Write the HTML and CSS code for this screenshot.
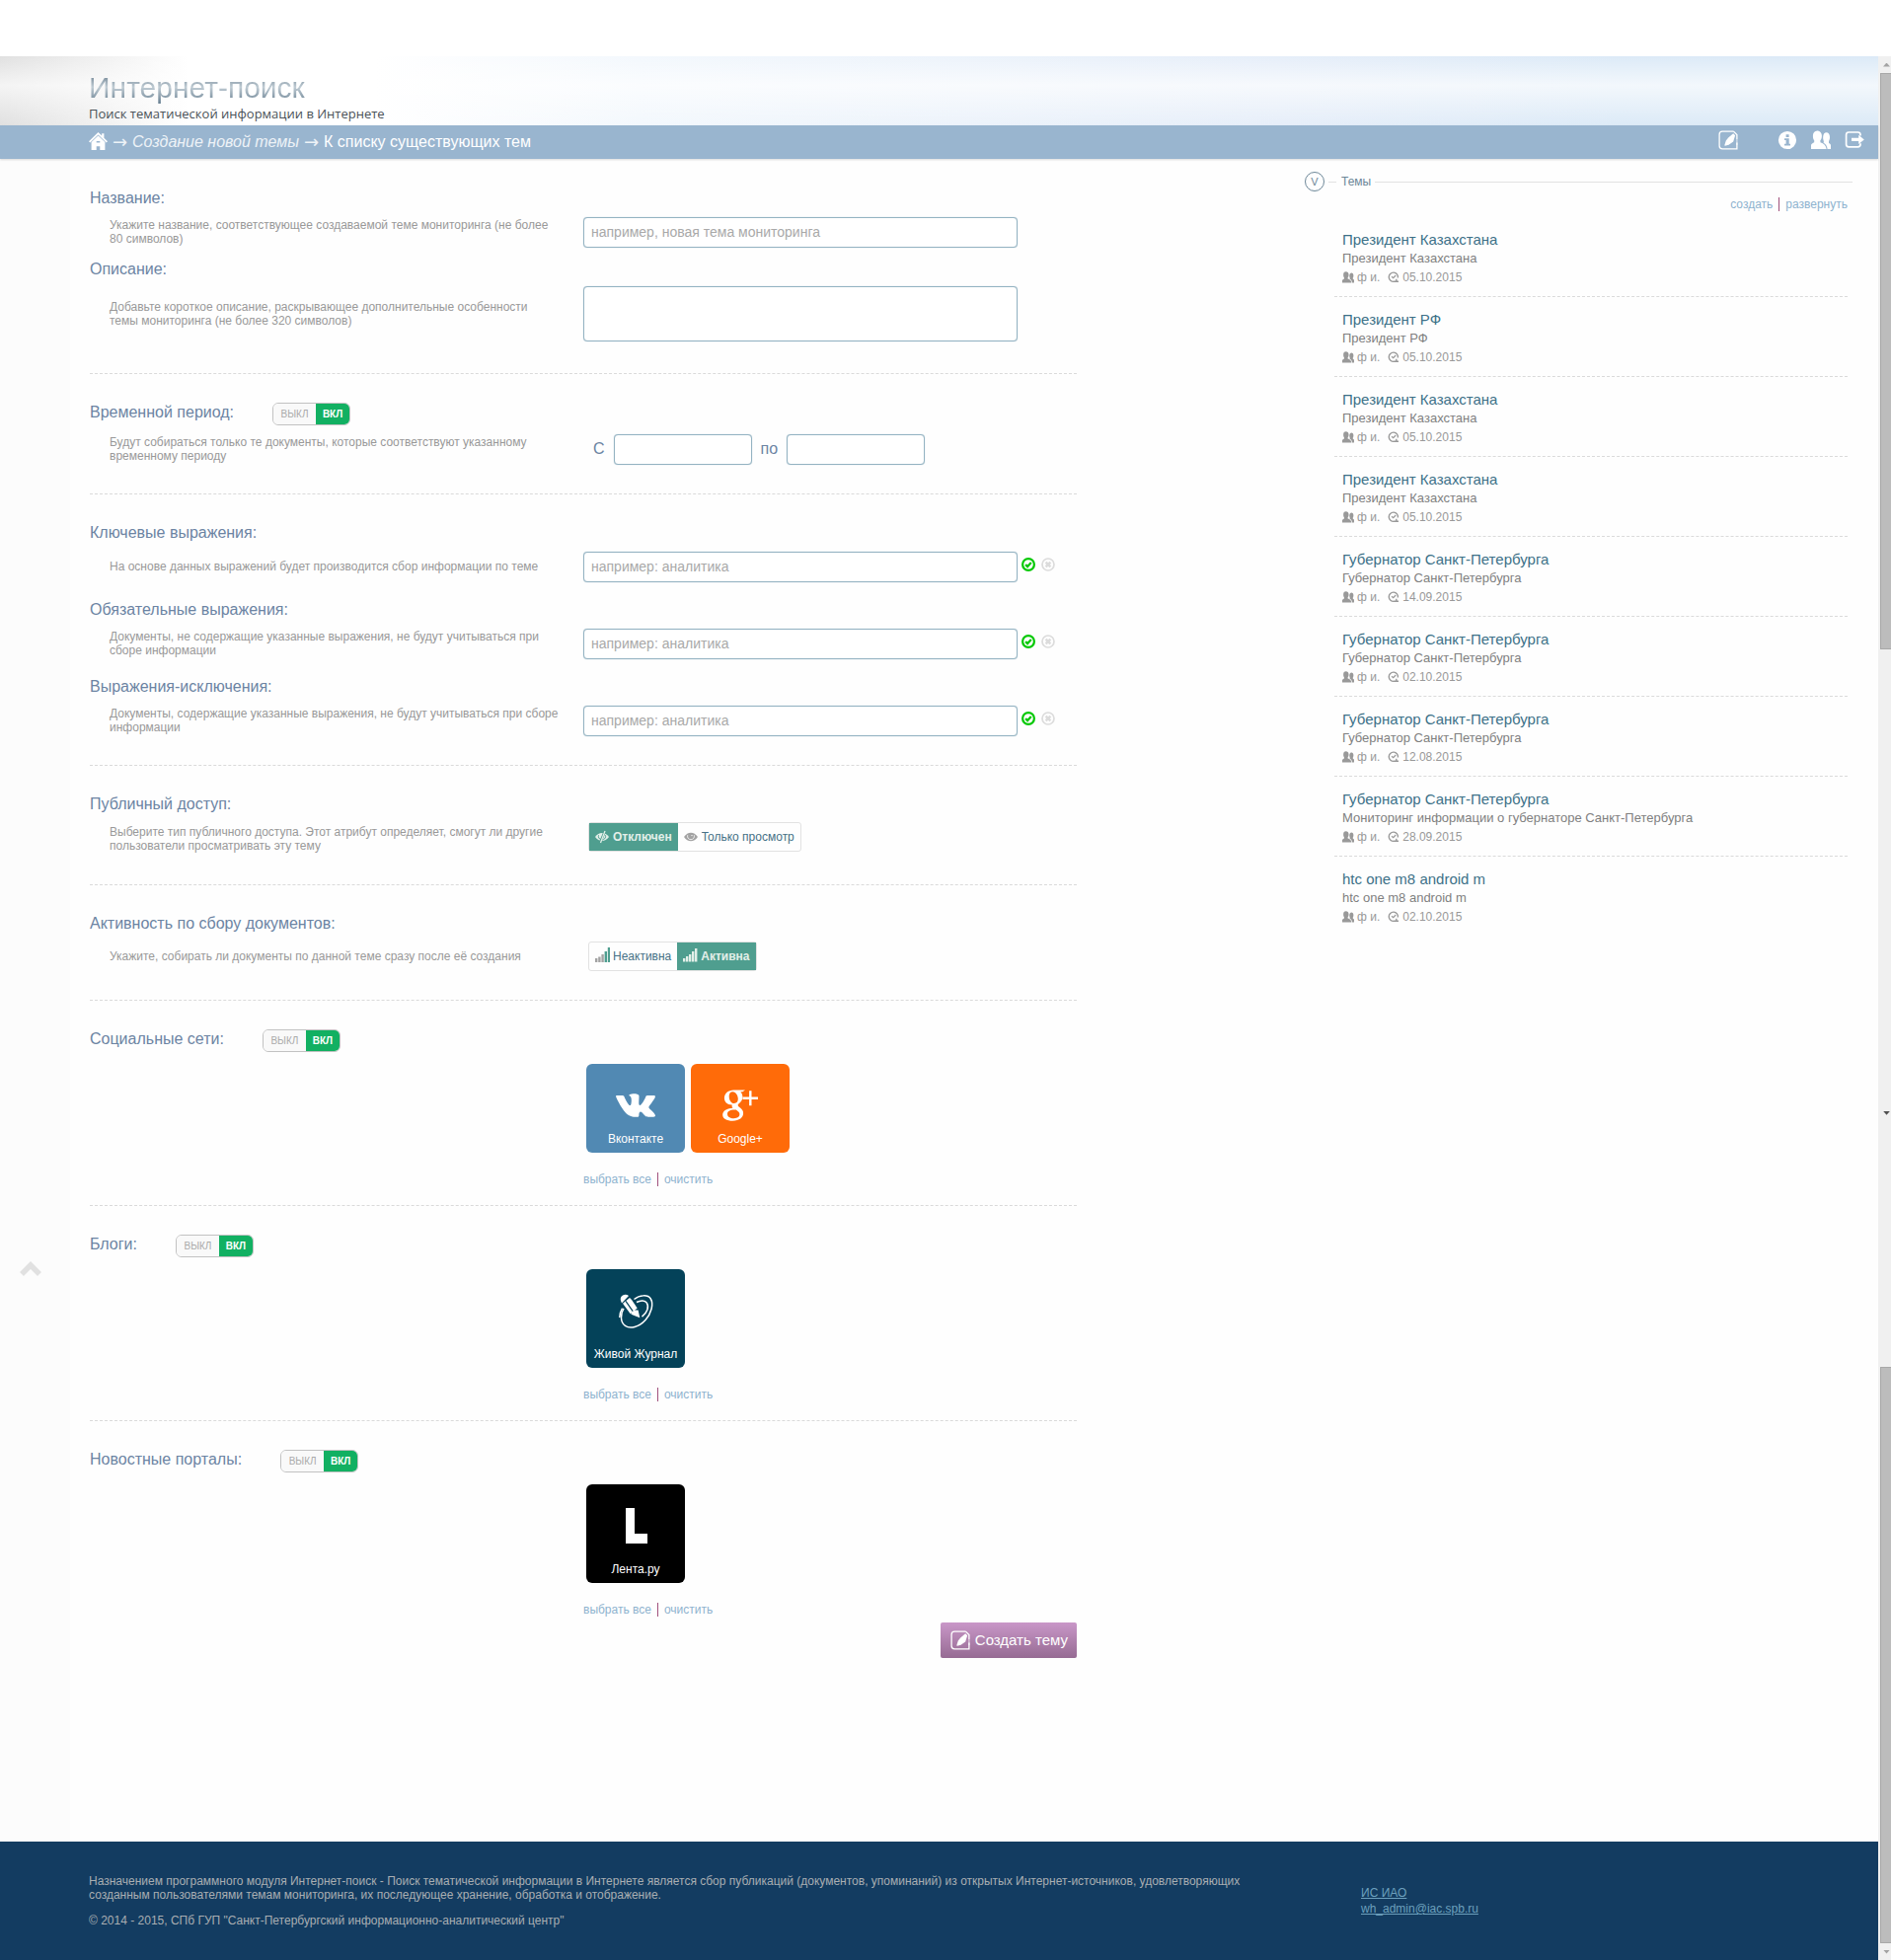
FILE: index.html
```html
<!DOCTYPE html>
<html lang="ru">
<head>
<meta charset="utf-8">
<title>Интернет-поиск</title>
<link rel="stylesheet" href="styles.css">
</head>
<body>
<svg class="sprite" aria-hidden="true">
  <symbol id="i-create" viewBox="0 0 20 20">
    <path d="M15.500 1.100H4.200C2.300 1.100 1.100 2.300 1.100 4.200v11.600c0 1.900 1.200 3.100 3.100 3.100h14.700v-6.400M18.900 9V4.600L15.500 1.100" fill="none" stroke="currentColor" stroke-width="1.300"/>
    <path d="M18.900 9v6" fill="none" stroke="currentColor" stroke-width="1.300" opacity=".6"/>
    <path d="M15.200 3.200l1.900 2-1.900 6.200-4.600 3.400-3.800.9-.5-.5 1.500-4.800 2.400-3z" fill="currentColor"/>
  </symbol>
  <symbol id="i-users" viewBox="0 0 20 20">
    <path d="M12.200 6.500c.2-2.700 1.500-4.200 3.300-4.200 2.100 0 3.500 1.900 3.500 4.700 0 1.700-.4 3-1 4v2c1.300.5 2 1.200 2 2.500V19h-3.400c-.3-3-1.700-5-4-6.300.5-.8.300-1.600-.1-2.700-.4-1-.4-2.200-.3-3.500z" fill="currentColor"/>
    <path d="M0 19v-4c.5-1.200 1.600-2.100 3.200-2.700v-2C2.400 9.300 1.900 7.900 1.900 5.700 1.900 2.600 3.600.5 6.200.5s4.700 2.100 4.700 5.200c0 2.200-.7 3.600-1.500 4.600v2c3.600 1.100 5.800 3.300 6.200 6.700z" fill="currentColor"/>
  </symbol>
  <symbol id="i-clock" viewBox="0 0 12 12">
    <path d="M10.400 6.500A4.600 4.600 0 1 0 6.500 10.300H11M8.800 7.800v2.500" fill="none" stroke="currentColor" stroke-width="1.400"/>
    <path d="M4 5.200l1.700 1.500L8.200 4" fill="none" stroke="currentColor" stroke-width="1.200"/>
  </symbol>
  <symbol id="i-ok" viewBox="0 0 14 14">
    <circle cx="7" cy="7" r="5.900" fill="none" stroke="currentColor" stroke-width="2.200"/>
    <path d="M4.100 7.100l2 2 3.700-4" fill="none" stroke="currentColor" stroke-width="2.200"/>
  </symbol>
  <symbol id="i-no" viewBox="0 0 14 14">
    <circle cx="7" cy="7" r="6" fill="none" stroke="currentColor" stroke-width="1.700"/>
    <path d="M4.600 4.600l4.800 4.800M9.400 4.600L4.600 9.400" fill="none" stroke="currentColor" stroke-width="2.500"/>
  </symbol>
</svg>

<div class="window">
  <div class="page">
    <header class="header">
      <h1 class="brand">Интернет-поиск</h1>
      <p class="tagline">Поиск тематической информации в Интернете</p>
    </header>

    <nav class="nav">
      <div class="crumbs">
        <a href="#" aria-label="На главную">
          <svg class="icon-home" viewBox="0 0 19 18"><path d="M9.500 0l3.700 3.600V1.200h2.200v4.500L19 9.200l-1.300 1.200-8.200-7.800-8.200 7.800L0 9.200z" fill="currentColor"/><path d="M9.500 3.600l6.900 6.500V18h-5.100v-3.800H7.700V18H2.600v-7.900zM7.700 8.900v1.700h3.600V8.900z" fill="currentColor" fill-rule="evenodd"/></svg>
        </a>
        <span>→</span><em>Создание новой темы</em><span>→</span><a href="#">К списку существующих тем</a>
      </div>
      <div class="tools">
        <a href="#" class="tool-create" aria-label="Создать тему"><svg class="icon-20"><use href="#i-create"/></svg></a>
        <a href="#" aria-label="Справка"><svg class="icon-20" viewBox="0 0 20 20"><path fill-rule="evenodd" d="M10 .9a9.100 9.100 0 1 0 0 18.200A9.100 9.100 0 0 0 10 .9zM8.600 4.300h3v2.800h-3zM7 8.200h4.700v5.500H13v1.800H7v-1.800h1.600V10H7z" fill="currentColor"/></svg></a>
        <a href="#" aria-label="Пользователи"><svg class="icon-20"><use href="#i-users"/></svg></a>
        <a href="#" aria-label="Выход"><svg class="icon-20" viewBox="0 0 20 20"><path d="M16 5.500V4.600c0-1.600-1-2.600-2.600-2.600H4.200C2.600 2 1.600 3 1.600 4.600v9.600c0 1.600 1 2.600 2.600 2.600h9.200c1.600 0 2.600-1 2.600-2.600v-.9" fill="none" stroke="currentColor" stroke-width="1.700"/><path d="M7 7.700h7.200V4.700l5.600 4.700-5.600 4.700v-3H7z" fill="currentColor"/></svg></a>
      </div>
    </nav>

    <div class="content">
      <button type="button" class="to-top" aria-label="Наверх">
        <svg class="icon-up" viewBox="0 0 22 15"><path d="M2 13L11 4l9 9" fill="none" stroke="currentColor" stroke-width="5.500"/></svg>
      </button>

      <form class="form">
        <section class="section section--intro">
          <div class="field">
            <label class="title" for="name">Название:</label>
            <div class="row">
              <p class="hint">Укажите название, соответствующее создаваемой теме мониторинга (не более 80 символов)</p>
              <input class="input" id="name" type="text" placeholder="например, новая тема мониторинга">
            </div>
          </div>
          <div class="field">
            <label class="title" for="about">Описание:</label>
            <div class="row">
              <p class="hint">Добавьте короткое описание, раскрывающее дополнительные особенности темы&nbsp;мониторинга (не более 320 символов)</p>
              <textarea class="input input--area" id="about"></textarea>
            </div>
          </div>
        </section>

        <section class="section section--period">
          <div class="head">
            <h2 class="title">Временной период:</h2>
            <label class="switch"><input type="checkbox" checked aria-label="Временной период"><span class="off">ВЫКЛ</span><span class="on">ВКЛ</span></label>
          </div>
          <div class="row">
            <p class="hint">Будут собираться только те документы, которые соответствуют указанному временному периоду</p>
            <div class="period">
              <label for="from">С</label><input class="input input--date" id="from" type="text">
              <label for="to">по</label><input class="input input--date" id="to" type="text">
            </div>
          </div>
        </section>

        <section class="section section--words">
          <div class="field">
            <label class="title" for="keys">Ключевые выражения:</label>
            <div class="row">
              <p class="hint">На основе данных выражений будет производится сбор информации по теме</p>
              <div class="entry"><input class="input" id="keys" type="text" placeholder="например: аналитика">
                <button type="button" class="mark mark--ok" aria-label="Добавить"><svg class="icon-14"><use href="#i-ok"/></svg></button><button type="button" class="mark" aria-label="Очистить"><svg class="icon-14"><use href="#i-no"/></svg></button></div>
            </div>
          </div>
          <div class="field">
            <label class="title" for="must">Обязательные выражения:</label>
            <div class="row">
              <p class="hint">Документы, не содержащие указанные выражения, не будут учитываться при сборе информации</p>
              <div class="entry"><input class="input" id="must" type="text" placeholder="например: аналитика">
                <button type="button" class="mark mark--ok" aria-label="Добавить"><svg class="icon-14"><use href="#i-ok"/></svg></button><button type="button" class="mark" aria-label="Очистить"><svg class="icon-14"><use href="#i-no"/></svg></button></div>
            </div>
          </div>
          <div class="field">
            <label class="title" for="except">Выражения-исключения:</label>
            <div class="row">
              <p class="hint">Документы, содержащие указанные выражения, не будут учитываться при сборе информации</p>
              <div class="entry"><input class="input" id="except" type="text" placeholder="например: аналитика">
                <button type="button" class="mark mark--ok" aria-label="Добавить"><svg class="icon-14"><use href="#i-ok"/></svg></button><button type="button" class="mark" aria-label="Очистить"><svg class="icon-14"><use href="#i-no"/></svg></button></div>
            </div>
          </div>
        </section>

        <section class="section">
          <h2 class="title">Публичный доступ:</h2>
          <div class="row">
            <p class="hint">Выберите тип публичного доступа. Этот атрибут определяет, смогут ли другие пользователи просматривать эту тему</p>
            <div class="choice">
              <label class="option"><input type="radio" name="access" checked>
                <svg class="icon-14" viewBox="0 0 14 12"><path d="M0 6c2-2.700 4.400-4 7-4s5 1.300 7 4c-2 2.700-4.400 4-7 4S2 8.700 0 6z" fill="currentColor"/><path d="M3.500 4.300C2.900 6 3.900 8.200 6 8.600M10.500 4.300c.5 1.700-.3 3.700-2.200 4.300" fill="none" stroke="#4f9e8f" stroke-width="1"/><path d="M10 0L5 12" stroke="#4f9e8f" stroke-width="2.500"/><path d="M10 0L5.500 12" stroke="currentColor" stroke-width="1.300"/></svg>Отключен</label>
              <label class="option"><input type="radio" name="access">
                <svg class="icon-14 icon-gray" viewBox="0 0 14 12"><path d="M0 6c2-2.900 4.400-4.300 7-4.300S12 3.100 14 6c-2 2.900-4.400 4.300-7 4.300S2 8.900 0 6z" fill="currentColor"/><path d="M3.700 4.200C2.900 6.500 4.700 8.700 7 8.700s4.100-2.200 3.300-4.500" fill="none" stroke="#fff" stroke-width=".8"/><circle cx="8" cy="4.600" r=".7" fill="#fff"/></svg>Только просмотр</label>
            </div>
          </div>
        </section>

        <section class="section">
          <h2 class="title">Активность по сбору документов:</h2>
          <div class="row">
            <p class="hint">Укажите, собирать ли документы по данной теме сразу после её создания</p>
            <div class="choice">
              <label class="option option--bars"><input type="radio" name="active">
                <svg class="icon-15" viewBox="0 0 15 15"><path d="M0 11h2.400v4H0zM3.200 9.500h2.400V15H3.200zM6.400 7h2.400v8H6.400z" fill="#a3a3a3"/><path d="M9.600 4H12v11H9.600zM12.800 0H15v15h-2.200z" fill="#4f9e8f"/></svg>Неактивна</label>
              <label class="option option--bars"><input type="radio" name="active" checked>
                <svg class="icon-15" viewBox="0 0 15 15"><path d="M0 11h2.400v3.500H0zM3 9h2.400v5.500H3zM6 7h2.400v7.500H6zM9 4h2.400v10.500H9zM12 1h2.400v13.500H12z" fill="currentColor"/></svg>Активна</label>
            </div>
          </div>
        </section>

        <section class="section section--sources">
          <div class="head">
            <h2 class="title">Социальные сети:</h2>
            <label class="switch"><input type="checkbox" checked aria-label="Социальные сети"><span class="off">ВЫКЛ</span><span class="on">ВКЛ</span></label>
          </div>
          <div class="tiles">
            <label class="tile tile--low tile--vk"><input type="checkbox" checked>
              <svg class="logo" viewBox="-8 -3.500 56 52"><path transform="translate(0 2.500) scale(1.667)" d="M13.162 18.994c.609 0 .858-.406.851-.915-.031-1.917.714-2.949 2.059-1.604 1.488 1.488 1.796 2.519 3.603 2.519h3.200c.808 0 1.126-.26 1.126-.668 0-.863-1.421-2.386-2.625-3.504-1.686-1.565-1.765-1.602-.313-3.486 1.801-2.339 4.157-5.336 2.073-5.336h-3.981c-.772 0-.828.435-1.103 1.083-.995 2.347-2.886 5.387-3.604 4.922-.751-.485-.407-2.406-.35-5.261.015-.754.011-1.271-1.141-1.539-.629-.145-1.241-.205-1.809-.205-2.273 0-3.841.953-2.950 1.119 1.571.293 1.420 3.692 1.054 5.160-.638 2.556-3.036-2.024-4.035-4.305-.241-.548-.315-.974-1.175-.974h-3.255c-.492 0-.787.160-.787.516 0 .602 2.960 6.720 5.786 9.770 2.756 2.975 5.480 2.708 7.376 2.708z" fill="#fff"/></svg>
              <span>Вконтакте</span></label>
            <label class="tile tile--low tile--gp"><input type="checkbox" checked>
              <svg class="logo" viewBox="-10 -10.500 56 52"><path fill-rule="evenodd" fill="#fff" d="M11.500 0H23l-2.600 1.800h-2.200c1.500 1.400 2.200 3.200 2.200 5.200 0 2.700-1.300 4.500-2.900 5.900-1.300 1-1.800 1.600-1.800 2.400 0 1 1 1.800 2.300 2.800 2 1.500 3.100 3 3.100 5.500 0 4.200-3.900 7.700-10.700 7.700C4 31.300.2 28.900.2 25.300c0-3.600 3.300-6.600 10.300-7-.8-.9-1.200-2-.7-3.300C5 15.200 1.900 12 1.900 8 1.900 3.600 6 0 11.500 0zM10.400 1.700c-2.500 0-3.700 2-3.700 4.500 0 3.600 1.900 7.300 5.200 7.300 2.600 0 3.900-1.900 3.900-4.400 0-3.500-2.100-7.400-5.400-7.400zm1.800 18.300c-4.900 0-7.200 1.800-7.200 4.200 0 2.800 2.700 4.500 6.600 4.500s5.800-1.600 5.800-4.100c0-1.900-1.200-2.700-3.600-4.500a10 10 0 0 0-1.600-.1z"/><path d="M20.500 8.200H36M28.300.8v15" stroke="#fff" stroke-width="2.400"/></svg>
              <span>Google+</span></label>
          </div>
          <p class="links"><a href="#">выбрать все</a><a href="#">очистить</a></p>
        </section>

        <section class="section section--sources">
          <div class="head">
            <h2 class="title">Блоги:</h2>
            <label class="switch"><input type="checkbox" checked aria-label="Блоги"><span class="off">ВЫКЛ</span><span class="on">ВКЛ</span></label>
          </div>
          <div class="tiles">
            <label class="tile tile--lj"><input type="checkbox" checked>
              <svg class="logo" viewBox="-11 -9 56 52"><g fill="none" stroke="#fff" stroke-width="1.500"><path d="M15.500 5.500C21 1 29.500.500 32.300 5c3.200 5.500.7 14.800-5.300 21.400-6.500 7.200-15.500 9.500-20.500 6-5.300-3.700-5-12.300-1.500-17.500"/><path d="M18 8.500c4-2.200 8.500-2.300 10.300.7 2.500 4 .7 9.500-4.800 14"/><path d="M.8 24c.2-4 1-6.700 2.700-9.300"/></g><path d="M2 7C1.300 4.500 2 2.700 4 1.400 6 .2 8.300.4 10 2L3 9.600z" fill="#fff"/><path d="M4 9.700L11 4l2 2 5.700 8.600-7 5.700z" fill="#fff"/><path d="M12.500 20.800l.7-4.200h6.400L21.300 24.300z" fill="#fff"/><path d="M7 7.300l7.200 10.400" stroke="#044259" stroke-width="1.200" fill="none"/></svg>
              <span>Живой Журнал</span></label>
          </div>
          <p class="links"><a href="#">выбрать все</a><a href="#">очистить</a></p>
        </section>

        <section class="section section--sources">
          <div class="head">
            <h2 class="title">Новостные порталы:</h2>
            <label class="switch"><input type="checkbox" checked aria-label="Новостные порталы"><span class="off">ВЫКЛ</span><span class="on">ВКЛ</span></label>
          </div>
          <div class="tiles">
            <label class="tile tile--lenta"><input type="checkbox" checked>
              <svg class="logo" viewBox="0 0 56 52"><rect x="18" y="8" width="9" height="36" fill="#fff"/><rect x="18" y="34" width="22" height="10" fill="#fff"/></svg>
              <span>Лента.ру</span></label>
          </div>
          <p class="links"><a href="#">выбрать все</a><a href="#">очистить</a></p>
        </section>

        <button type="submit" class="submit"><svg class="icon-20"><use href="#i-create"/></svg>Создать тему</button>
      </form>

      <aside class="topics">
        <div class="topics-head"><button type="button" class="fold">V</button><h2 class="topics-title">Темы</h2></div>
        <p class="links links--right"><a href="#">создать</a><a href="#">развернуть</a></p>
        <ul class="list">
          <li class="item"><a href="#">Президент Казахстана</a><p>Президент Казахстана</p><div class="meta"><svg class="icon-12"><use href="#i-users"/></svg>ф и.<svg class="icon-12 icon-date"><use href="#i-clock"/></svg>05.10.2015</div></li>
          <li class="item"><a href="#">Президент РФ</a><p>Президент РФ</p><div class="meta"><svg class="icon-12"><use href="#i-users"/></svg>ф и.<svg class="icon-12 icon-date"><use href="#i-clock"/></svg>05.10.2015</div></li>
          <li class="item"><a href="#">Президент Казахстана</a><p>Президент Казахстана</p><div class="meta"><svg class="icon-12"><use href="#i-users"/></svg>ф и.<svg class="icon-12 icon-date"><use href="#i-clock"/></svg>05.10.2015</div></li>
          <li class="item"><a href="#">Президент Казахстана</a><p>Президент Казахстана</p><div class="meta"><svg class="icon-12"><use href="#i-users"/></svg>ф и.<svg class="icon-12 icon-date"><use href="#i-clock"/></svg>05.10.2015</div></li>
          <li class="item"><a href="#">Губернатор Санкт-Петербурга</a><p>Губернатор Санкт-Петербурга</p><div class="meta"><svg class="icon-12"><use href="#i-users"/></svg>ф и.<svg class="icon-12 icon-date"><use href="#i-clock"/></svg>14.09.2015</div></li>
          <li class="item"><a href="#">Губернатор Санкт-Петербурга</a><p>Губернатор Санкт-Петербурга</p><div class="meta"><svg class="icon-12"><use href="#i-users"/></svg>ф и.<svg class="icon-12 icon-date"><use href="#i-clock"/></svg>02.10.2015</div></li>
          <li class="item"><a href="#">Губернатор Санкт-Петербурга</a><p>Губернатор Санкт-Петербурга</p><div class="meta"><svg class="icon-12"><use href="#i-users"/></svg>ф и.<svg class="icon-12 icon-date"><use href="#i-clock"/></svg>12.08.2015</div></li>
          <li class="item"><a href="#">Губернатор Санкт-Петербурга</a><p>Мониторинг информации о губернаторе Санкт-Петербурга</p><div class="meta"><svg class="icon-12"><use href="#i-users"/></svg>ф и.<svg class="icon-12 icon-date"><use href="#i-clock"/></svg>28.09.2015</div></li>
          <li class="item"><a href="#">htc one m8 android m</a><p>htc one m8 android m</p><div class="meta"><svg class="icon-12"><use href="#i-users"/></svg>ф и.<svg class="icon-12 icon-date"><use href="#i-clock"/></svg>02.10.2015</div></li>
        </ul>
      </aside>
    </div>

    <footer class="footer">
      <div class="footer-text">
        <p>Назначением программного модуля Интернет-поиск - Поиск тематической информации в Интернете является сбор публикаций (документов, упоминаний) из открытых Интернет-источников, удовлетворяющих созданным пользователями темам мониторинга, их последующее хранение, обработка и отображение.</p>
        <p>© 2014 - 2015, СПб ГУП "Санкт-Петербургский информационно-аналитический центр"</p>
      </div>
      <div class="footer-links"><a href="#">ИС ИАО</a><a href="mailto:wh_admin@iac.spb.ru">wh_admin@iac.spb.ru</a></div>
    </footer>
  </div>

  <div class="scrollbar" aria-hidden="true">
    <div class="cap"><i class="arrow arrow--up"></i></div>
    <div class="thumb"></div>
    <div class="track track--long"></div>
    <i class="arrow arrow--dark"></i>
    <div class="track"></div>
    <div class="thumb"></div>
    <div class="cap"><i class="arrow"></i></div>
  </div>
</div>
</body>
</html>
```

FILE: styles.css
```css
* { box-sizing: border-box; }

body {
  margin: 0;
  background: #fff;
  font: 12px/14px "Liberation Sans", Arial, sans-serif;
  color: #999;
}

h1, h2, p, ul { margin: 0; padding: 0; font-weight: normal; }
a { color: inherit; text-decoration: none; }
button { padding: 0; border: 0; background: none; font: inherit; color: inherit; cursor: pointer; }
svg { display: block; flex: none; }
.sprite { display: none; }

.icon-12 { width: 12px; height: 12px; }
.icon-14 { width: 14px; height: 14px; }
.icon-15 { width: 15px; height: 15px; }
.icon-20 { width: 20px; height: 20px; }

/* Window */
.window { display: flex; padding-top: 57px; }
.page { flex: 1; min-width: 0; background: #fefefe; }

.header {
  height: 70px;
  padding: 14px 90px 0;
  background:
    linear-gradient(to bottom, rgba(255, 255, 255, 0), rgba(255, 255, 255, .65) 42%, rgba(255, 255, 255, 0)),
    linear-gradient(to right, #e0e0e0, #fff 10%, #fff 20%, #f3f8fd 34%, #e6eef9 68%, #dceaf7 86%);
}
.brand {
  width: max-content;
  font-size: 30px;
  line-height: 36px;
  color: transparent;
  background: linear-gradient(to bottom, #7f92a0 20%, #c0ccd4 48%, #6d8495 90%);
  -webkit-background-clip: text;
  background-clip: text;
}
.tagline { font: 13px/16px "Open Sans", sans-serif; color: #4a5258; }

.nav {
  display: flex;
  justify-content: space-between;
  align-items: flex-start;
  height: 34px;
  padding: 5px 14px 0 90px;
  background: #99b5cf;
  box-shadow: 0 1px 2px rgba(0, 0, 0, .15);
  position: relative;
  color: #fff;
}
.crumbs { display: flex; align-items: center; gap: 5px; font-size: 16px; line-height: 24px; }
.crumbs em, .crumbs span { color: #edf2f7; }
.crumbs span { width: 15px; font-family: "DejaVu Sans", sans-serif; font-size: 18px; }
.icon-home { width: 19px; height: 18px; margin-bottom: 3px; }
.tools { display: flex; gap: 14px; }
.tool-create { margin-right: 26px; }

/* Content */
.content { display: flex; align-items: stretch; padding-right: 26px; }
.to-top {
  flex: 0 0 71px;
  display: flex;
  align-items: flex-start;
  padding: 1117px 0 0 20px;
  background: #fcfcfc;
  color: #e1e1e1;
}
.icon-up { width: 22px; height: 15px; }

.form {
  flex: 0 1 1000px;
  display: flex;
  flex-direction: column;
  margin-left: 20px;
  padding-bottom: 186px;
}
.section { padding: 28px 0 29px; border-bottom: 1px dashed #dadada; }
.section--intro { padding: 29px 0 32px; }
.section--period, .section--words { padding-bottom: 28px; }
.section--sources { padding-bottom: 19px; }
.section--sources:last-of-type { padding-bottom: 6px; border: 0; }

.title { display: block; font-size: 16px; line-height: 22px; color: #6c84a3; }
.head { display: flex; gap: 39px; }
.field + .field { margin-top: 16px; }
.section--intro .field + .field { margin-top: 10px; }

.row {
  display: grid;
  grid-template-columns: 460px 1fr;
  column-gap: 20px;
  align-items: center;
  margin: 7px 0 0 20px;
}
.section--period .row { margin-top: 9px; }
.section--words .row { min-height: 34px; margin-top: 6px; }
.section--intro .row { margin-top: 6px; }
.hint { padding: 3px 0; }

.input {
  width: 440px;
  height: 31px;
  padding: 0 7px;
  border: 1px solid #94b3c2;
  border-radius: 4px;
  background: #fff;
  box-shadow: 0 0 1px #9dbac8;
  font: 14px/20px "Liberation Sans", Arial, sans-serif;
  color: #555;
  outline: 0;
}
.input::placeholder { color: #a9a9a9; opacity: 1; }
.input--area { display: block; height: 56px; resize: none; }
.input--date { width: 140px; }

.period { display: flex; align-items: center; gap: 9px; padding-left: 10px; font-size: 16px; color: #6c84a3; }
.entry { display: flex; align-items: center; gap: 4px; }
.mark { padding-bottom: 5px; color: #dcdcdc; }
.mark--ok { color: #00c800; }
.mark + .mark { margin-left: 2px; }

/* Switch */
.switch {
  display: flex;
  height: 23px;
  margin: 1px 0 -2px;
  border: 1px solid #c2c2c2;
  border-radius: 6px;
  overflow: hidden;
  font-size: 10px;
  line-height: 22px;
  text-align: center;
}
.switch input, .option input, .tile input { position: absolute; opacity: 0; pointer-events: none; }
.off { width: 43px; background: #f9f9f9; color: #aaa; }
.on { width: 34px; background: #12b062; color: #fff; font-weight: bold; }

/* Radio groups */
.choice {
  display: flex;
  align-self: start;
  justify-self: start;
  height: 30px;
  margin-left: 5px;
  border: 1px solid #e2e2e2;
  border-radius: 3px;
  color: #467186;
}
.option { display: flex; align-items: center; gap: 4px; padding: 0 6px; }
.option:has(:checked) {
  background: #4f9e8f;
  color: #e3efe9;
  font-weight: bold;
}
.option--bars { gap: 3px; }
.option--bars svg { margin-bottom: 4px; }
.icon-gray { color: #a3a3a3; }

/* Source tiles */
.tiles { display: flex; gap: 6px; margin: 14px 0 20px 503px; }
.tile {
  display: flex;
  flex-direction: column;
  align-items: center;
  width: 100px;
  height: 100px;
  padding: 16px 0 7px;
  border-radius: 6px;
  color: #fff;
}
.tile span { margin-top: auto; }
.tile--low { height: 90px; }
.tile--vk { background: #5189b3; }
.tile--gp { background: #ff6b09; }
.tile--lj { background: #044259; }
.tile--lenta { background: #000; }
.logo { width: 56px; height: 52px; }

.links { display: flex; margin-left: 500px; color: #8eb3cf; }
.links a + a { margin-left: 6px; padding-left: 6px; border-left: 1px solid #a0507c; }
.links--right { justify-content: flex-end; margin: 6px 5px 0 0; }

.submit {
  display: flex;
  align-items: center;
  align-self: flex-end;
  gap: 5px;
  height: 36px;
  padding: 0 9px 0 10px;
  border-radius: 2px;
  background: linear-gradient(#c997c8, #966b93);
  font-size: 15px;
  color: #fff;
}

/* Topics */
.topics { flex: 0 0 555px; margin-left: auto; padding-top: 13px; }
.topics-head { display: flex; align-items: center; gap: 4px; color: #6d8798; }
.topics-head::after { content: ""; flex: 1; height: 1px; background: #e2e2e2; }
.topics-title { display: flex; align-items: center; gap: 5px; font-size: 12px; line-height: 20px; }
.topics-title::before { content: ""; width: 8px; height: 1px; background: #e2e2e2; }
.fold { width: 20px; height: 20px; border: 1px solid #6d8798; border-radius: 50%; font-size: 11px; line-height: 18px; }
.list { margin: 6px 5px 0 30px; list-style: none; }
.item { padding: 13px 8px 9px; border-bottom: 1px dashed #dadada; }
.item:last-child { border: 0; }
.item a { display: block; font-size: 15px; line-height: 20px; color: #3d7188; }
.item p { font-size: 13px; line-height: 18px; color: #808080; }
.meta { display: flex; align-items: center; gap: 3px; line-height: 20px; }
.icon-date { margin-left: 5px; }

/* Footer */
.footer {
  display: flex;
  gap: 99px;
  height: 120px;
  padding: 33px 90px 0;
  background: #133c61;
  color: #a9aeb2;
}
.footer-text { flex: 0 1 1190px; }
.footer-text p + p { margin-top: 12px; }
.footer-links { display: flex; flex-direction: column; padding-top: 11px; line-height: 16px; color: #6ca0bd; }
.footer-links a { width: max-content; text-decoration: underline; }

/* Scrollbar */
.scrollbar {
  flex: 0 0 13px;
  display: flex;
  flex-direction: column;
  align-items: stretch;
  padding-left: 2px;
  background: #f0f0f0;
}
.cap { display: flex; align-items: center; height: 17px; }
.thumb { flex: 583 0 0; border: solid #a8a8a8; border-width: 1px 0 1px 1px; background: #bcbcbc; }
.track { flex: 256 0 0; }
.track--long { flex-grow: 469; }
.arrow { width: 7px; height: 4px; margin-left: 3px; background: #a3a3a3; clip-path: polygon(0 0, 100% 0, 50% 100%); }
.arrow--up { clip-path: polygon(50% 0, 100% 100%, 0 100%); }
.arrow--dark { background: #505050; }
```
